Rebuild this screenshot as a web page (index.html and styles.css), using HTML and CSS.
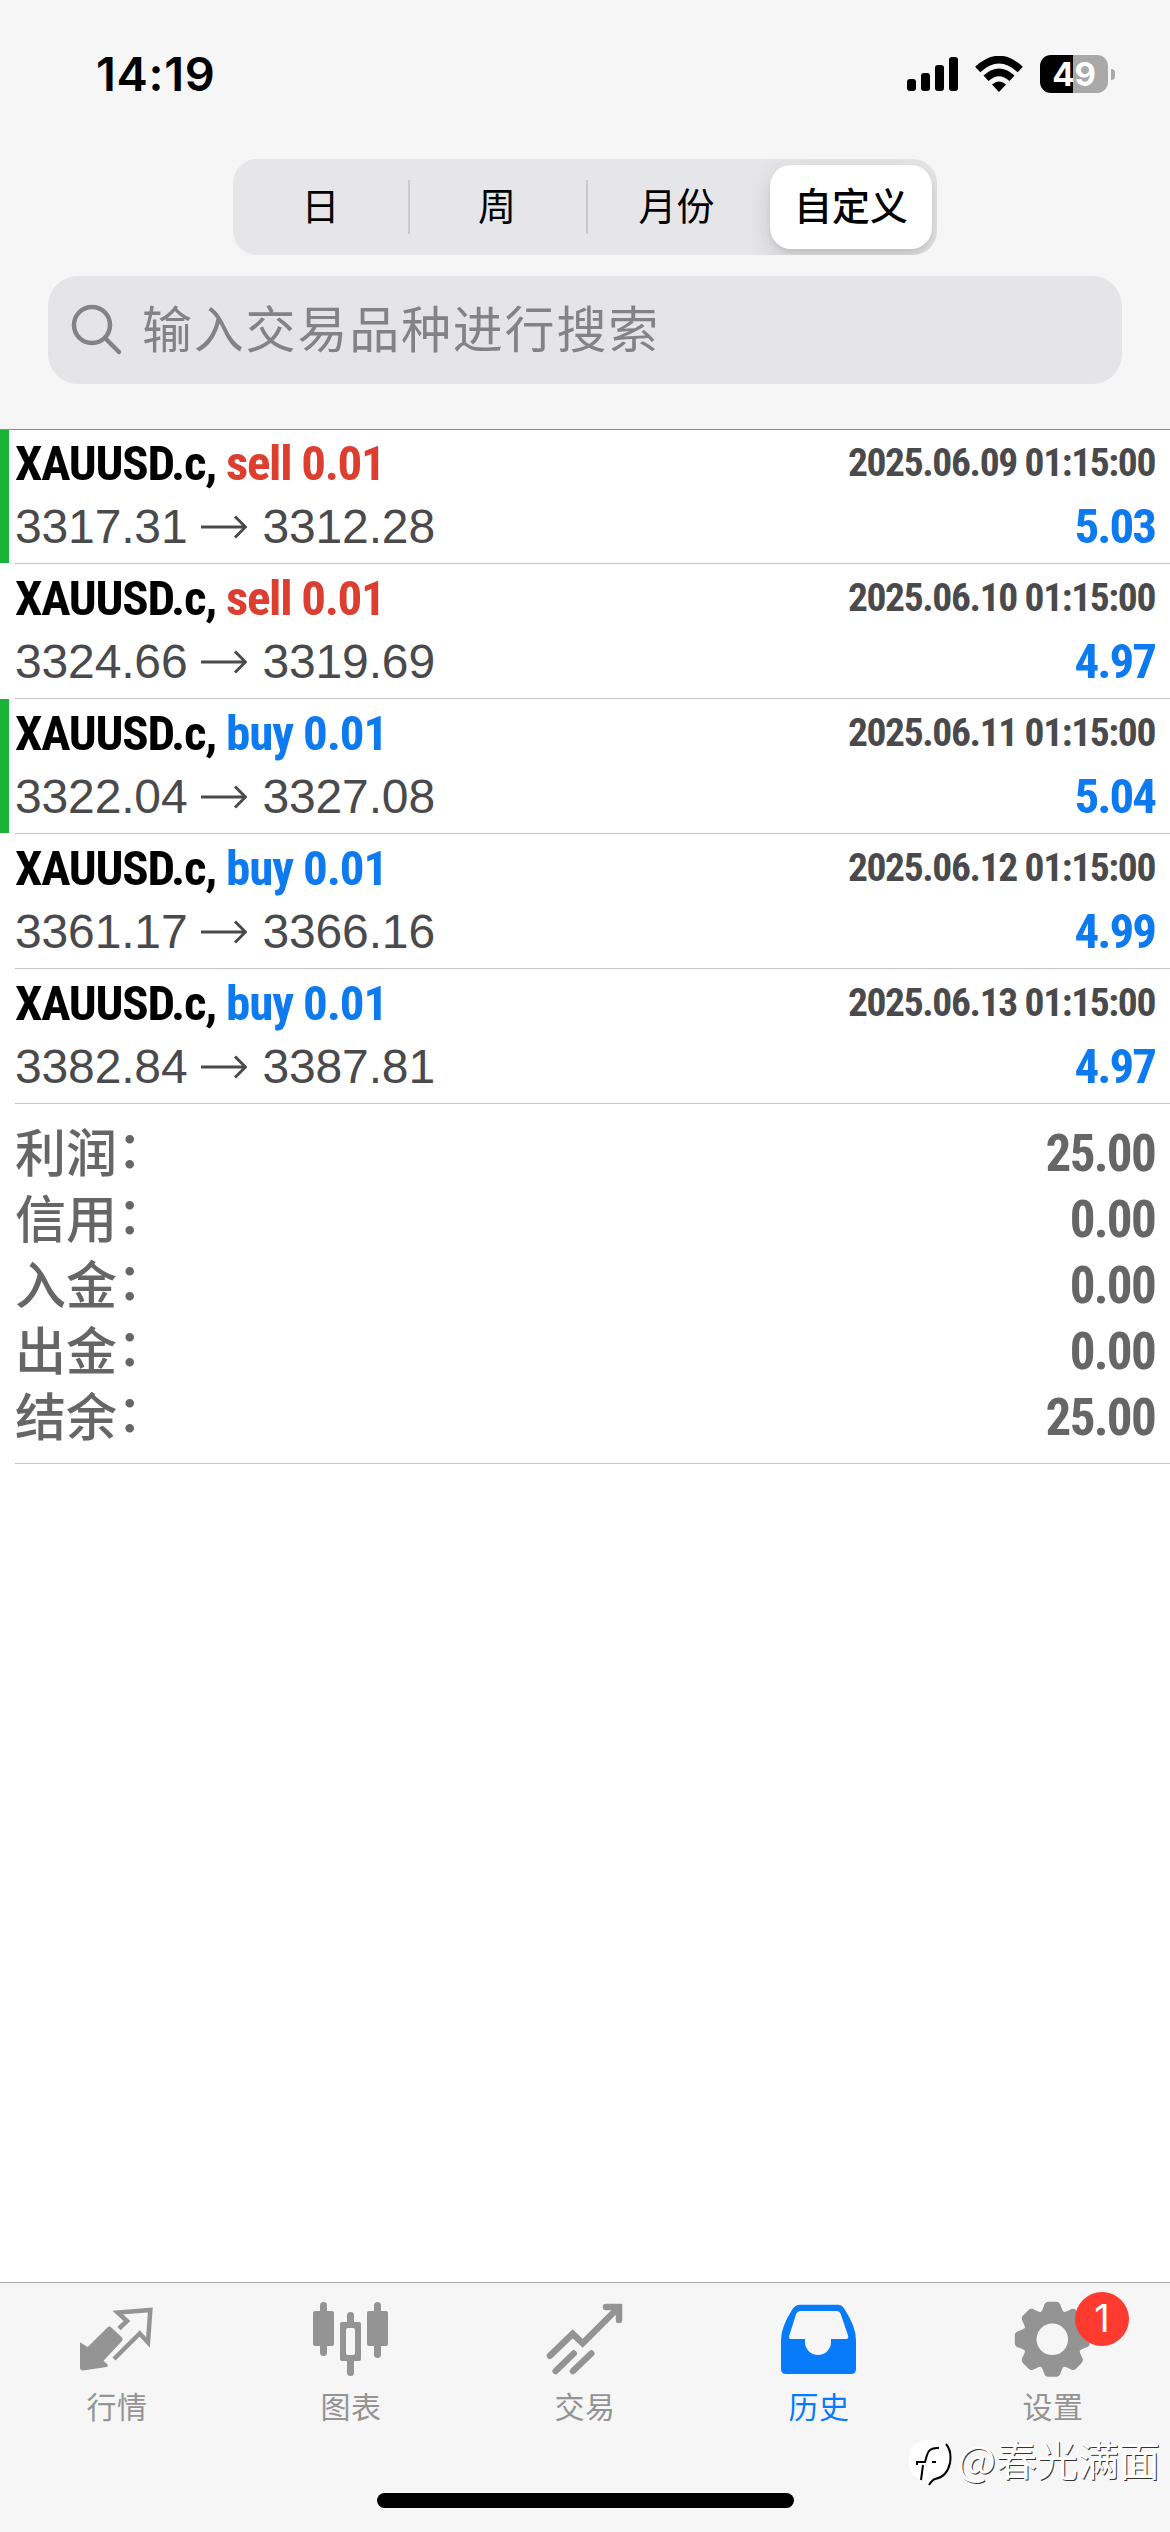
FILE: index.html
```html
<!DOCTYPE html>
<html lang="zh-CN">
<head>
<meta charset="utf-8">
<title>历史</title>
<link rel="stylesheet" href="styles.css">
</head>
<body>
<div class="screen">
  <header class="header">
    <div class="status">
      <span class="clock">14:19</span>
      <div class="status-icons">
        <svg class="signal" width="51" height="34" viewBox="0 0 51 34"><rect x="0" y="22" width="9" height="12" rx="3"/><rect x="14" y="16" width="9" height="18" rx="3"/><rect x="28" y="8" width="9" height="26" rx="3"/><rect x="42" y="0" width="9" height="34" rx="3"/></svg>
        <svg class="wifi" width="48" height="36" viewBox="0 0 48 36"><path d="M24 36 L17 28.6 Q24 22.6 31 28.6Z"/><path class="arc" d="M11 22.2 Q24 10.400 37 22.200"/><path class="arc" d="M2.700 13.500 Q24 -6.300 45.300 13.500"/></svg>
        <div class="battery"><span>49</span></div>
        <i class="nub"></i>
      </div>
    </div>
    <nav class="segments">
      <span class="segment">日</span>
      <span class="segment ruled">周</span>
      <span class="segment ruled">月份</span>
      <span class="segment selected">自定义</span>
    </nav>
    <div class="search">
      <svg width="52" height="52" viewBox="0 0 52 52"><circle cx="21" cy="21" r="18"/><path d="M34 34 L48 48"/></svg>
      <span>输入交易品种进行搜索</span>
    </div>
  </header>

  <main class="history">
    <div class="deals">
      <div class="deal marked">
        <div class="deal-body">
          <div class="line"><b class="symbol">XAUUSD.c, <em class="sell">sell 0.01</em></b><span class="time">2025.06.09 01:15:00</span></div>
          <div class="line prices"><span>3317.31</span><svg class="arrow" viewBox="0 0 46 24"><path d="M0 12H44M34 1.500L44.500 12L34 22.500"/></svg><span>3312.28</span><b class="profit">5.03</b></div>
        </div>
      </div>
      <div class="deal">
        <div class="deal-body">
          <div class="line"><b class="symbol">XAUUSD.c, <em class="sell">sell 0.01</em></b><span class="time">2025.06.10 01:15:00</span></div>
          <div class="line prices"><span>3324.66</span><svg class="arrow" viewBox="0 0 46 24"><path d="M0 12H44M34 1.500L44.500 12L34 22.500"/></svg><span>3319.69</span><b class="profit">4.97</b></div>
        </div>
      </div>
      <div class="deal marked">
        <div class="deal-body">
          <div class="line"><b class="symbol">XAUUSD.c, <em class="buy">buy 0.01</em></b><span class="time">2025.06.11 01:15:00</span></div>
          <div class="line prices"><span>3322.04</span><svg class="arrow" viewBox="0 0 46 24"><path d="M0 12H44M34 1.500L44.500 12L34 22.500"/></svg><span>3327.08</span><b class="profit">5.04</b></div>
        </div>
      </div>
      <div class="deal">
        <div class="deal-body">
          <div class="line"><b class="symbol">XAUUSD.c, <em class="buy">buy 0.01</em></b><span class="time">2025.06.12 01:15:00</span></div>
          <div class="line prices"><span>3361.17</span><svg class="arrow" viewBox="0 0 46 24"><path d="M0 12H44M34 1.500L44.500 12L34 22.500"/></svg><span>3366.16</span><b class="profit">4.99</b></div>
        </div>
      </div>
      <div class="deal">
        <div class="deal-body">
          <div class="line"><b class="symbol">XAUUSD.c, <em class="buy">buy 0.01</em></b><span class="time">2025.06.13 01:15:00</span></div>
          <div class="line prices"><span>3382.84</span><svg class="arrow" viewBox="0 0 46 24"><path d="M0 12H44M34 1.500L44.500 12L34 22.500"/></svg><span>3387.81</span><b class="profit">4.97</b></div>
        </div>
      </div>
    </div>
    <dl class="summary">
      <div><dt>利润<span class="colon">：</span></dt><dd>25.00</dd></div>
      <div><dt>信用<span class="colon">：</span></dt><dd>0.00</dd></div>
      <div><dt>入金<span class="colon">：</span></dt><dd>0.00</dd></div>
      <div><dt>出金<span class="colon">：</span></dt><dd>0.00</dd></div>
      <div><dt>结余<span class="colon">：</span></dt><dd>25.00</dd></div>
    </dl>
  </main>

  <footer class="footer">
    <nav class="tabs">
      <div class="tab">
        <svg viewBox="0 0 96 90"><path class="fill" d="M11 52.300L18.700 57L38.500 37.500Q40.300 35.500 42.300 37.500L53 47.500Q54.500 49.500 53 51L34.500 70.700L38.500 74.500Q39.500 76.500 37.500 77L14 80.500Q11 80.500 11 77.500Z"/><path class="line4" d="M50 38.500L58 31L48.800 22.500L81.300 20L79 52.500L70.700 43.500L45 69"/></svg>
        <span>行情</span>
      </div>
      <div class="tab">
        <svg viewBox="0 0 96 90"><g class="fill"><rect x="10" y="21" width="21" height="35" rx="2"/><rect x="17" y="12" width="7" height="54" rx="3.500"/><rect x="64" y="21" width="21" height="35" rx="2"/><rect x="71" y="12" width="7" height="56" rx="3.500"/><rect x="44" y="22" width="7" height="20" rx="3.500"/><rect x="44" y="66" width="7" height="20" rx="3.500"/><rect x="37" y="32" width="21" height="39" rx="2"/></g><rect class="hole" x="43" y="38" width="9" height="27" rx="2"/></svg>
        <span>图表</span>
      </div>
      <div class="tab">
        <svg viewBox="0 0 96 90"><path class="line6" d="M13 65.700L35.700 43.800L45.700 53.300L81 18"/><path class="line6" d="M69 17H82V30"/><path class="line6" d="M18.700 81L36.700 63.500M36 81L54.300 63.500"/></svg>
        <span>交易</span>
      </div>
      <div class="tab active">
        <svg viewBox="0 0 96 90"><path class="fill" fill-rule="evenodd" d="M29 14.700H67Q71 14.700 73.500 19Q85 37 85 50V79Q85 84 80 84H15Q10 84 10 79V50Q10 37 21.500 19Q24.500 14.700 29 14.700ZM29 21Q26.500 21 25.300 23.500L18.300 45.500Q17.300 49 20 49H34V52A13 13 0 0 0 60 52V49H75Q78 49 77 45.500L69.500 23.500Q68.500 21 66 21Z"/></svg>
        <span>历史</span>
      </div>
      <div class="tab">
        <svg viewBox="0 0 96 90"><defs><path id="tooth" d="M-13 -25Q-9.500 -29 -8.500 -33Q-7.500 -37.500 -4 -37.500H4Q7.500 -37.500 8.500 -33Q9.500 -29 13 -25Z"/></defs><g class="fill" transform="translate(47.300 49.300)"><circle r="29"/><use href="#tooth"/><use href="#tooth" transform="rotate(45)"/><use href="#tooth" transform="rotate(90)"/><use href="#tooth" transform="rotate(135)"/><use href="#tooth" transform="rotate(180)"/><use href="#tooth" transform="rotate(225)"/><use href="#tooth" transform="rotate(270)"/><use href="#tooth" transform="rotate(315)"/></g><circle class="hole" cx="47.300" cy="49.300" r="15.800"/></svg>
        <span>设置</span>
        <b class="badge">1</b>
      </div>
    </nav>
    <div class="home"></div>
    <div class="watermark">
      <svg width="46" height="50" viewBox="0 0 46 50"><path fill="#fff" d="M20 3C35 1 44 9 42 23C41 36 34 41 26 42L21 48L20 43C7 43 1 36 2 23C2 10 8 4 20 3Z"/><path fill="none" stroke="#000" stroke-width="2" d="M39 7Q45 14 43 26Q40 40 28 42Q25 43 22 48M32 11Q22 10 20 18L18 25H10V28M16 28L14 43M25 25H29"/></svg>
      <span>@春光满面</span>
    </div>
  </footer>
</div>
</body>
</html>
```
FILE: styles.css
```css
* { box-sizing: border-box; }
body, dl, dd { margin: 0; }
body {
  background: #fff;
  font-family: Inter, "Noto Sans CJK SC", sans-serif;
}
.screen {
  display: flex;
  flex-direction: column;
  width: 1170px;
  height: 2532px;
}
svg { display: block; flex: none; }

.header {
  display: flex;
  flex-direction: column;
  align-items: center;
  height: 429px;
  background: #f6f6f6;
}
.status {
  display: flex;
  justify-content: space-between;
  align-items: center;
  width: 100%;
  height: 148px;
  margin-bottom: 11px;
  padding: 0 55px 0 96px;
}
.clock {
  font-size: 47px;
  font-weight: 600;
  line-height: 60px;
  letter-spacing: .700px;
}
.status-icons {
  display: flex;
  align-items: center;
}
.wifi { margin: 0 17px; }
.wifi .arc { fill: none; stroke: #000; stroke-width: 7.500; }
.battery {
  display: flex;
  align-items: center;
  justify-content: center;
  width: 68px;
  height: 38px;
  border-radius: 11px;
  background: linear-gradient(90deg, #000 33px, #a9a9a9 33px);
  color: #fff;
  font-size: 33px;
  font-weight: 700;
}
.nub {
  width: 4px;
  height: 11px;
  margin-left: 3px;
  border-radius: 0 5px 5px 0;
  background: #a9a9a9;
}

.segments {
  display: grid;
  grid-template-columns: 175px 178px 181px 162px;
  height: 96px;
  width: 704px;
  padding: 6px 2px 6px 0;
  margin-bottom: 21px;
  border-radius: 24px;
  background: #e6e6e8;
  overflow: hidden;
}
.segment {
  display: flex;
  align-items: center;
  justify-content: center;
  padding-bottom: 2px;
  font-size: 38px;
  line-height: 50px;
}
.ruled {
  background: linear-gradient(#cacacc, #cacacc) 0 15px / 2px 54px no-repeat;
}
.selected {
  margin-left: 3px;
  margin-right: -3px;
  border-radius: 21px;
  background: #fff;
  box-shadow: 0 9px 24px rgba(0, 0, 0, .14), 0 3px 4px rgba(0, 0, 0, .06);
  font-weight: 500;
}
.search {
  display: flex;
  align-items: center;
  width: 1074px;
  height: 108px;
  padding-left: 23px;
  border-radius: 30px;
  background: #e5e5e7;
  color: #838387;
}
.search svg {
  margin-right: 19px;
  fill: none;
  stroke: #838387;
  stroke-width: 4.500;
  stroke-linecap: round;
}
.search span {
  padding-bottom: 1px;
  font-size: 50px;
  font-weight: 400;
  line-height: 70px;
  letter-spacing: 1.800px;
}

.history { flex: 1; }
.deal {
  height: 135px;
  padding-left: 15px;
}
.deal:first-child { box-shadow: inset 0 1px #8c8c8c; }
.marked {
  background: linear-gradient(#18b435, #18b435) 0 0 / 9px 134px no-repeat;
}
.deal-body {
  height: 135px;
  padding: 5px 15px 0 0;
  border-bottom: 1px solid #c4c4c6;
}
.line {
  display: flex;
  align-items: baseline;
  height: 60px;
  line-height: 60px;
  color: #4a4a4d;
}
.symbol, .time, .profit, .summary dd {
  font-family: Roboto, sans-serif;
  font-stretch: 75%;
  font-weight: 700;
}
.symbol {
  color: #000;
  font-size: 49px;
  letter-spacing: -1.250px;
}
.symbol em { font-style: normal; }
.sell { color: #dc3e30; letter-spacing: -1.300px; }
.buy { color: #0e7af0; letter-spacing: -1.100px; }
.time {
  align-self: flex-start;
  margin-left: auto;
  font-size: 39.500px;
  line-height: 57px;
  letter-spacing: -1.370px;
}
.line.prices {
  height: 66px;
  font-family: "Liberation Sans", sans-serif;
  font-size: 48px;
  line-height: 66px;
}
.prices span { letter-spacing: -.150px; }
.arrow {
  width: 46px;
  height: 24px;
  margin: 0 15px 0 14px;
  align-self: center;
  fill: none;
  stroke: #4a4a4d;
  stroke-width: 3;
}
.profit {
  margin-left: auto;
  color: #0e7af0;
  font-size: 49px;
  letter-spacing: -2px;
}

.summary {
  height: 360px;
  margin-left: 15px;
  padding: 17px 15px 0 0;
  border-bottom: 1px solid #c4c4c6;
  color: #666;
}
.summary div {
  display: flex;
  justify-content: space-between;
  height: 66px;
  line-height: 66px;
}
.summary dt {
  margin-top: -4px;
  font-family: "Noto Sans CJK SC", sans-serif;
  font-size: 51px;
  font-weight: 500;
}
.colon {
  position: relative;
  top: -4px;
}
.summary dd {
  font-size: 51px;
  letter-spacing: -1.700px;
}

.footer {
  position: relative;
  height: 250px;
  border-top: 1px solid #a8a8aa;
  background: #f6f6f6;
}
.tabs { display: flex; }
.tab {
  position: relative;
  display: flex;
  flex: 1;
  flex-direction: column;
  align-items: center;
  height: 210px;
  padding-top: 7px;
  color: #949494;
  font-size: 30px;
  line-height: 44px;
}
.tab svg { width: 96px; height: 90px; }
.tab span {
  margin-top: 5px;
  letter-spacing: .500px;
}
.active { color: #087bfa; }
.fill { fill: currentColor; }
.hole { fill: #f6f6f6; }
.line4, .line6 {
  fill: none;
  stroke: currentColor;
  stroke-width: 4.500;
}
.line6 { stroke-width: 6.500; stroke-linecap: round; }
.badge {
  position: absolute;
  top: 9px;
  left: 139px;
  width: 54px;
  height: 54px;
  border-radius: 50%;
  background: #ff3b30;
  color: #fff;
  font-size: 38px;
  font-weight: 400;
  line-height: 53px;
  text-align: center;
}
.home {
  width: 417px;
  height: 15px;
  margin: 0 auto;
  border-radius: 8px;
  background: #000;
}
.watermark {
  position: absolute;
  right: 10px;
  bottom: 40px;
  display: flex;
  align-items: center;
  gap: 4px;
}
.watermark span {
  padding-bottom: 8px;
  color: #fff;
  font-family: "Noto Sans CJK SC", sans-serif;
  font-size: 41px;
  font-weight: 400;
  line-height: 52px;
  text-shadow: 1px 1px 0 #333;
}
```
